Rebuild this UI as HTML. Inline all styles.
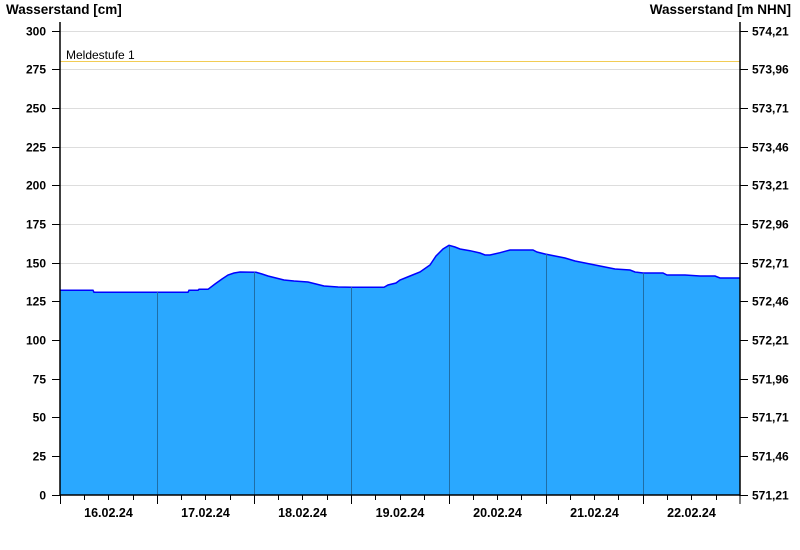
<!DOCTYPE html>
<html><head><meta charset="utf-8"><style>
html,body{margin:0;padding:0;background:#fff;}
svg{display:block;}
text{font-family:"Liberation Sans",Arial,sans-serif;font-size:12px;font-weight:bold;fill:#000;}
</style></head><body>
<svg width="800" height="550" viewBox="0 0 800 550" xmlns="http://www.w3.org/2000/svg">
<g stroke="#dddddd" stroke-width="1">
<line x1="60" x2="740" y1="456.5" y2="456.5"/>
<line x1="60" x2="740" y1="417.5" y2="417.5"/>
<line x1="60" x2="740" y1="379.5" y2="379.5"/>
<line x1="60" x2="740" y1="340.5" y2="340.5"/>
<line x1="60" x2="740" y1="301.5" y2="301.5"/>
<line x1="60" x2="740" y1="263.5" y2="263.5"/>
<line x1="60" x2="740" y1="224.5" y2="224.5"/>
<line x1="60" x2="740" y1="185.5" y2="185.5"/>
<line x1="60" x2="740" y1="147.5" y2="147.5"/>
<line x1="60" x2="740" y1="108.5" y2="108.5"/>
<line x1="60" x2="740" y1="69.5" y2="69.5"/>
<line x1="60" x2="740" y1="31.5" y2="31.5"/>
</g>
<line x1="60" x2="740" y1="61.5" y2="61.5" stroke="#f2cc55" stroke-width="1"/>
<text x="66" y="59" style="font-weight:normal">Meldestufe 1</text>
<polygon fill="#2aa8ff" stroke="none" points="60,495 60,290.3 93,290.3 94,292.3 188,292.3 189,290.3 198,290.3 199,289.3 208,289.3 215,284 222,279 228,275 234,273 240,272 256,272.3 262,274 268,276 276,278 284,280 294,281 308,282 316,284 324,286 338,287 352,287.3 384,287.3 388,285 396,283 400,280 410,276 420,272 430,265 436,256 443,249 449,245.3 455,247 460,249 470,250.7 480,253 485,255 490,255 500,252.7 510,250 533,250 537,252 545,254 555,256 565,258 575,261 585,263 595,265 605,267 615,269 630,270 635,272 643,273 663,273 667,275 685,275 700,276 715,276 720,278 740,278 740,495"/>
<polyline fill="none" stroke="#0000ff" stroke-width="1.5" points="60,290.3 93,290.3 94,292.3 188,292.3 189,290.3 198,290.3 199,289.3 208,289.3 215,284 222,279 228,275 234,273 240,272 256,272.3 262,274 268,276 276,278 284,280 294,281 308,282 316,284 324,286 338,287 352,287.3 384,287.3 388,285 396,283 400,280 410,276 420,272 430,265 436,256 443,249 449,245.3 455,247 460,249 470,250.7 480,253 485,255 490,255 500,252.7 510,250 533,250 537,252 545,254 555,256 565,258 575,261 585,263 595,265 605,267 615,269 630,270 635,272 643,273 663,273 667,275 685,275 700,276 715,276 720,278 740,278"/>
<g stroke="#1f6ea6" stroke-width="1">
<line x1="157.5" x2="157.5" y1="292" y2="495"/>
<line x1="254.5" x2="254.5" y1="272" y2="495"/>
<line x1="351.5" x2="351.5" y1="287" y2="495"/>
<line x1="449.5" x2="449.5" y1="246" y2="495"/>
<line x1="546.5" x2="546.5" y1="254" y2="495"/>
<line x1="643.5" x2="643.5" y1="273" y2="495"/>
</g>
<g stroke="#000" stroke-width="1.5">
<line x1="60" x2="60" y1="22" y2="496"/>
<line x1="740" x2="740" y1="22" y2="496"/>
<line x1="60" x2="740" y1="495" y2="495"/>
</g>
<g stroke="#000" stroke-width="1">
<path d="M52,495.5h8M52,456.5h8M52,417.5h8M52,379.5h8M52,340.5h8M52,301.5h8M52,263.5h8M52,224.5h8M52,185.5h8M52,147.5h8M52,108.5h8M52,69.5h8M52,31.5h8"/>
<path d="M740,495.5h8M740,456.5h8M740,417.5h8M740,379.5h8M740,340.5h8M740,301.5h8M740,263.5h8M740,224.5h8M740,185.5h8M740,147.5h8M740,108.5h8M740,69.5h8M740,31.5h8"/>
<path d="M60.5,495v9M157.5,495v9M254.5,495v9M351.5,495v9M449.5,495v9M546.5,495v9M643.5,495v9M740,495v9"/>
<path d="M84.5,495v5M108.5,495v5M133.5,495v5M181.5,495v5M205.5,495v5M230.5,495v5M278.5,495v5M302.5,495v5M327.5,495v5M375.5,495v5M400.5,495v5M424.5,495v5M473.5,495v5M497.5,495v5M521.5,495v5M570.5,495v5M594.5,495v5M618.5,495v5M667.5,495v5M691.5,495v5M716.5,495v5"/>
</g>
<text x="6" y="14" style="font-size:13.5px">Wasserstand [cm]</text>
<text x="791" y="14" text-anchor="end" style="font-size:13.5px">Wasserstand [m NHN]</text>
<g text-anchor="end">
<text x="46" y="499.5">0</text>
<text x="46" y="460.5">25</text>
<text x="46" y="421.5">50</text>
<text x="46" y="383.5">75</text>
<text x="46" y="344.5">100</text>
<text x="46" y="305.5">125</text>
<text x="46" y="267.5">150</text>
<text x="46" y="228.5">175</text>
<text x="46" y="189.5">200</text>
<text x="46" y="151.5">225</text>
<text x="46" y="112.5">250</text>
<text x="46" y="73.5">275</text>
<text x="46" y="35.5">300</text>
</g>
<g>
<text x="752" y="499.5">571,21</text>
<text x="752" y="460.5">571,46</text>
<text x="752" y="421.5">571,71</text>
<text x="752" y="383.5">571,96</text>
<text x="752" y="344.5">572,21</text>
<text x="752" y="305.5">572,46</text>
<text x="752" y="267.5">572,71</text>
<text x="752" y="228.5">572,96</text>
<text x="752" y="189.5">573,21</text>
<text x="752" y="151.5">573,46</text>
<text x="752" y="112.5">573,71</text>
<text x="752" y="73.5">573,96</text>
<text x="752" y="35.5">574,21</text>
</g>
<g text-anchor="middle" style="font-size:12.5px">
<text x="108.5" y="517" style="font-size:12.5px">16.02.24</text>
<text x="205.5" y="517" style="font-size:12.5px">17.02.24</text>
<text x="302.5" y="517" style="font-size:12.5px">18.02.24</text>
<text x="400" y="517" style="font-size:12.5px">19.02.24</text>
<text x="497.5" y="517" style="font-size:12.5px">20.02.24</text>
<text x="594.5" y="517" style="font-size:12.5px">21.02.24</text>
<text x="691.5" y="517" style="font-size:12.5px">22.02.24</text>
</g>
</svg>
</body></html>
